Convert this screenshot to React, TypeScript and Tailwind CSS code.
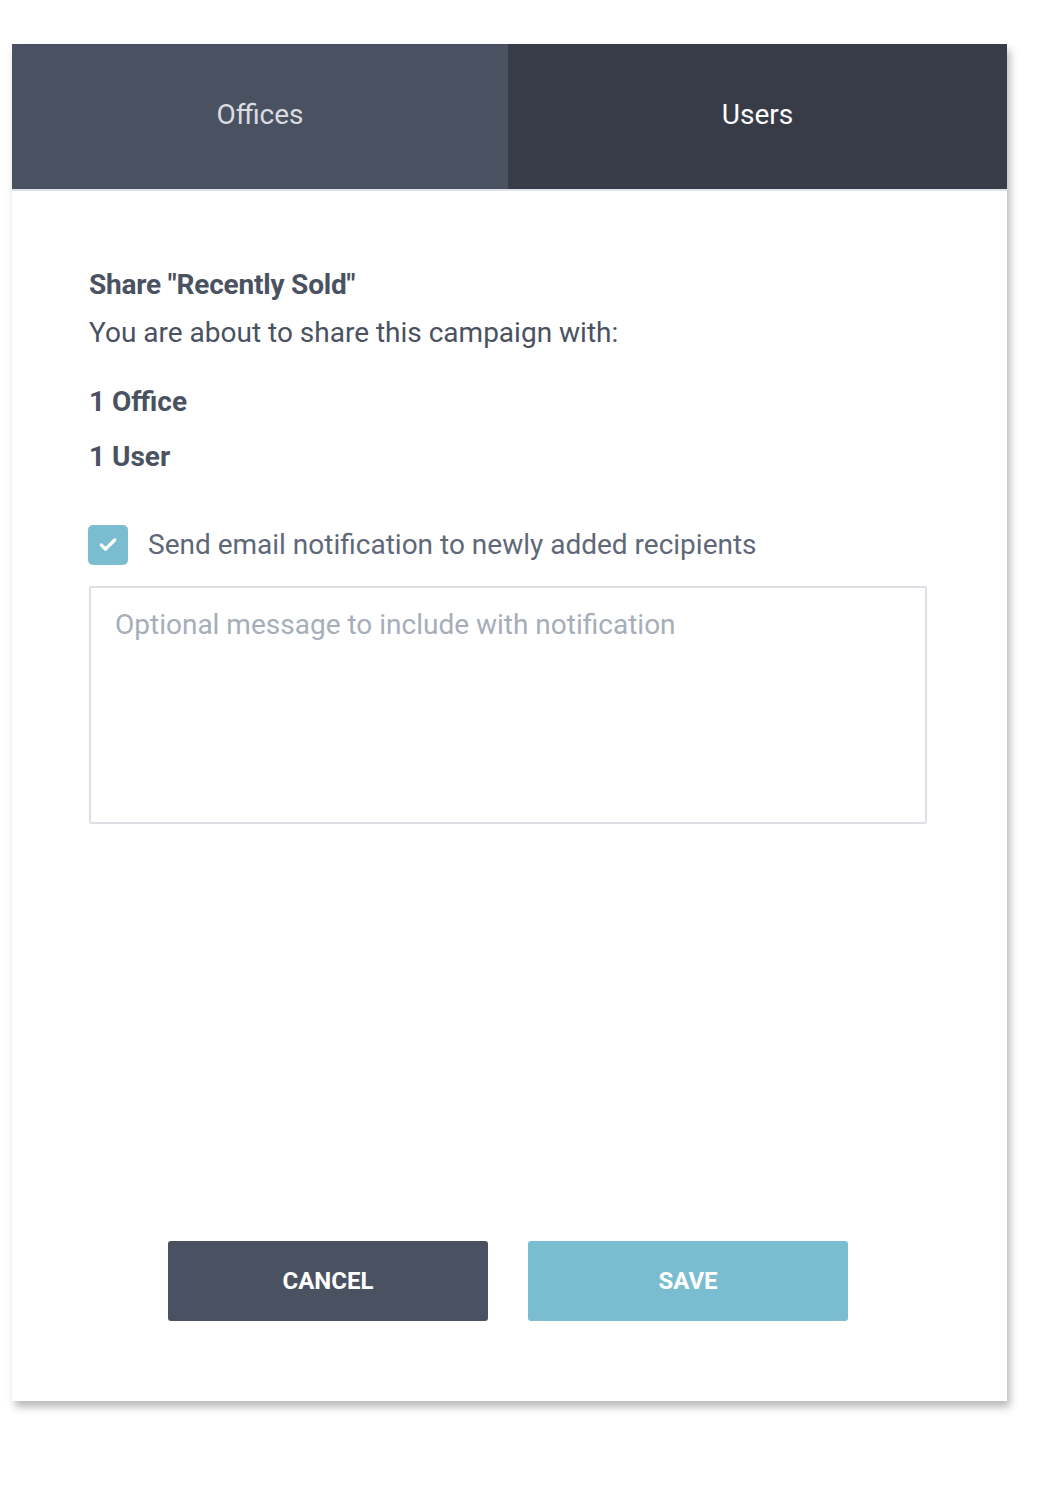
import { Check } from "lucide-react";

export default function App() {
  return (
    <div className="min-h-[1500px] bg-white pt-[44px] pl-[12px] font-['Roboto',sans-serif]">
      {/* Share dialog card */}
      <div className="w-[995px] h-[1357px] bg-white flex flex-col shadow-[3px_6px_8px_rgba(0,0,0,0.28)]">
        {/* Tabs */}
        <div className="flex h-[147px] border-b-2 border-[#dde3ea]">
          <div className="w-[496px] flex items-center justify-center pb-[4px] bg-[#4a5261] text-[28px] text-[#d9dce1]">
            Offices
          </div>
          <div className="flex-1 flex items-center justify-center pb-[4px] bg-[#373c48] text-[28px] text-white">
            Users
          </div>
        </div>

        {/* Body */}
        <div className="flex flex-col pl-[77px] pr-[80px] pt-[78px] text-[#4a5261]">
          <h2 className="text-[28px] leading-[32px] font-bold tracking-[-0.2px]">Share "Recently Sold"</h2>
          <p className="mt-[16px] text-[28px] leading-[32px]">You are about to share this campaign with:</p>
          <p className="mt-[37px] text-[28px] leading-[32px] font-bold">1 Office</p>
          <p className="mt-[23px] text-[28px] leading-[32px] font-bold">1 User</p>

          <label className="mt-[52px] -ml-[1px] h-[40px] flex items-center gap-[20px]">
            <span className="w-[40px] h-[40px] rounded-[5px] bg-[#7bbdd0] flex items-center justify-center">
              <Check className="w-[20px] h-[20px] text-white" strokeWidth={4} />
            </span>
            <span className="text-[28px] leading-[42px] text-[#5f6878]">Send email notification to newly added recipients</span>
          </label>

          <textarea
            className="mt-[21px] h-[238px] w-full resize-none rounded-[3px] border-2 border-[#dde1e6] px-[24px] py-[19px] text-[28px] leading-[36px] outline-none placeholder:text-[#a5aeb9]"
            placeholder="Optional message to include with notification"
          />

          {/* Actions */}
          <div className="mt-[417px] flex justify-center gap-[40px]">
            <button className="w-[320px] h-[80px] rounded-[3px] bg-[#4a5261] text-white text-[24px] font-bold">
              CANCEL
            </button>
            <button className="w-[320px] h-[80px] rounded-[3px] bg-[#7bbdd0] text-white text-[24px] font-bold">
              SAVE
            </button>
          </div>
        </div>
      </div>
    </div>
  );
}
